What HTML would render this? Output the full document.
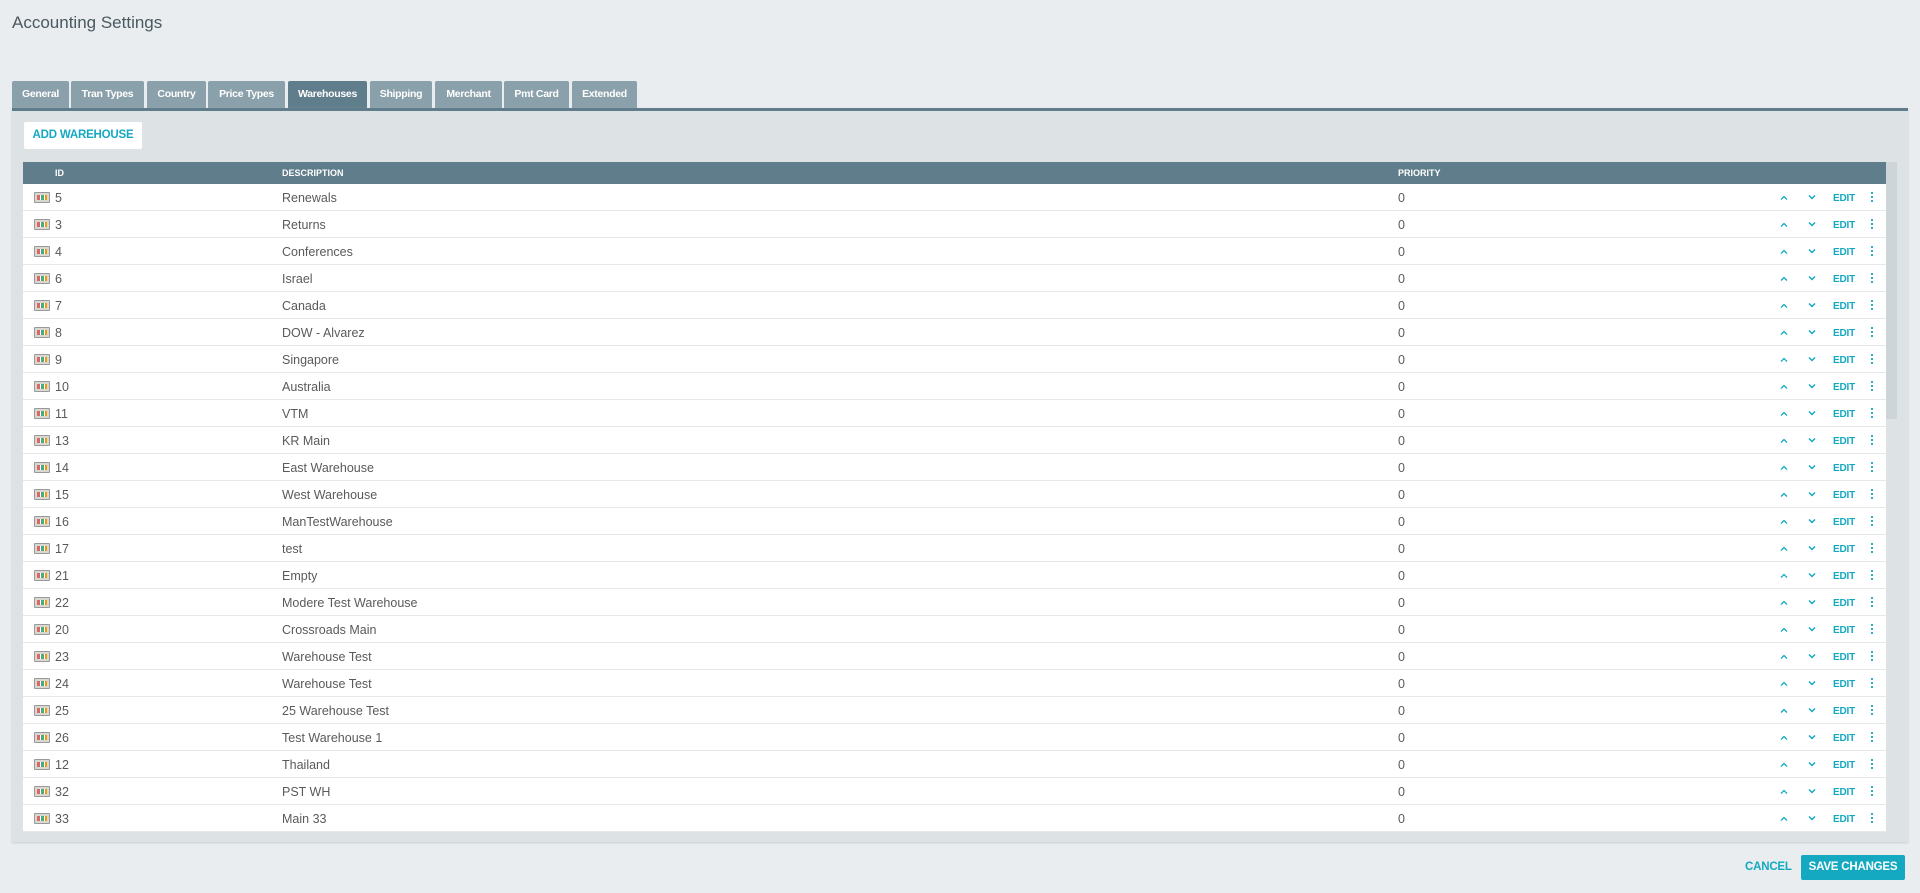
<!DOCTYPE html>
<html><head><meta charset="utf-8"><style>
*{box-sizing:border-box;margin:0;padding:0}
body{width:1920px;height:893px;background:#e9edf0;font-family:"Liberation Sans",sans-serif;position:relative;overflow:hidden;color:#555}
.title{position:absolute;left:12px;top:13px;font-size:17px;color:#4a5860}
.tab{position:absolute;top:81px;height:27px;background:#8aa0ab;color:#fff;font-size:10.5px;font-weight:bold;line-height:27px;text-align:center;border-radius:2px 2px 0 0;letter-spacing:-0.3px}
.tab.act{background:#607d8b}
.panel{position:absolute;left:12px;top:108px;width:1896px;height:734px;background:#dde2e5;border-top:3px solid #607d8b;box-shadow:0 1px 2px #c5ccd0}
.add{position:absolute;left:24px;top:122px;width:118px;height:27px;background:#fff;color:#14a9c1;font-size:11.5px;font-weight:bold;line-height:27px;text-align:center;border-radius:2px;letter-spacing:-0.2px}
.tbl{position:absolute;left:23px;top:162px;width:1863px;height:670px;background:#fff;overflow:hidden}
.hd{height:22px;background:#607d8b;color:#fff;font-size:9px;font-weight:bold;position:relative}
.hd span{position:absolute;top:6px}
.row{height:27px;border-bottom:1px solid #e6e9eb;position:relative;font-size:12.5px;color:#5a5a5a}
.row span{position:absolute;top:7px}
.ic{position:absolute;left:11px;top:8px;width:16px;height:11px;background:#d8d8d0;border:1px solid #999;border-radius:1px}
.ic:before{content:"";position:absolute;left:2px;top:2px;width:10px;height:5px;background:linear-gradient(90deg,#d66 0 3px,#fff 3px 4px,#4a8 4px 7px,#fff 7px 8px,#e90 8px)}
.row svg{position:absolute;top:11px}
.row .ed{position:absolute;left:1810px;top:9px;font-size:10px;font-weight:bold;color:#14a9c1;letter-spacing:-0.2px}
.dt{position:absolute;left:1848px;top:8px;width:2px;height:11px;background:radial-gradient(circle,#14a9c1 1px,transparent 1.2px) 0 0/2px 4px}
.sb{position:absolute;left:1886px;top:162px;width:11px;height:257px;background:#cdd5d9}
.cancel{position:absolute;left:1745px;top:861px;font-size:11.5px;font-weight:bold;color:#14a9c1;letter-spacing:-0.2px}
.save{position:absolute;left:1801px;top:855px;width:104px;height:25px;background:#14a9c1;color:#fff;font-size:11.5px;font-weight:bold;line-height:25px;text-align:center;border-radius:2px;letter-spacing:-0.2px}
</style></head><body>
<div class="title">Accounting Settings</div>
<div class="tab" style="left:12px;width:57px">General</div>
<div class="tab" style="left:71px;width:73px">Tran Types</div>
<div class="tab" style="left:147px;width:59px">Country</div>
<div class="tab" style="left:208px;width:77px">Price Types</div>
<div class="tab act" style="left:288px;width:79px">Warehouses</div>
<div class="tab" style="left:370px;width:62px">Shipping</div>
<div class="tab" style="left:435px;width:67px">Merchant</div>
<div class="tab" style="left:504px;width:65px">Pmt Card</div>
<div class="tab" style="left:572px;width:65px">Extended</div>
<div class="panel"></div>
<div class="add">ADD WAREHOUSE</div>
<div class="sb"></div>
<div class="tbl">
<div class="hd"><span style="left:32px">ID</span><span style="left:259px">DESCRIPTION</span><span style="left:1375px">PRIORITY</span></div>
ROWS
</div>
<div class="cancel">CANCEL</div>
<div class="save">SAVE CHANGES</div>
<script>
var d=[[5,"Renewals"],[3,"Returns"],[4,"Conferences"],[6,"Israel"],[7,"Canada"],[8,"DOW - Alvarez"],[9,"Singapore"],[10,"Australia"],[11,"VTM"],[13,"KR Main"],[14,"East Warehouse"],[15,"West Warehouse"],[16,"ManTestWarehouse"],[17,"test"],[21,"Empty"],[22,"Modere Test Warehouse"],[20,"Crossroads Main"],[23,"Warehouse Test"],[24,"Warehouse Test"],[25,"25 Warehouse Test"],[26,"Test Warehouse 1"],[12,"Thailand"],[32,"PST WH"],[33,"Main 33"]];
var up='<svg style="left:1757px" width="8" height="5" viewBox="0 0 8 5"><path d="M1 4.5L4 1.5L7 4.5" fill="none" stroke="#14a9c1" stroke-width="1.3"/></svg>';
var dn='<svg style="left:1785px" width="8" height="5" viewBox="0 0 8 5"><path d="M1 0.5L4 3.5L7 0.5" fill="none" stroke="#14a9c1" stroke-width="1.5"/></svg>';
var h="";d.forEach(function(r){h+='<div class="row"><div class="ic"></div><span style="left:32px">'+r[0]+'</span><span style="left:259px">'+r[1]+'</span><span style="left:1375px">0</span>'+up+dn+'<span class="ed">EDIT</span><span class="dt"></span></div>'});
var t=document.querySelector('.tbl');t.innerHTML=t.innerHTML.replace('ROWS',h);
</script>
</body></html>
